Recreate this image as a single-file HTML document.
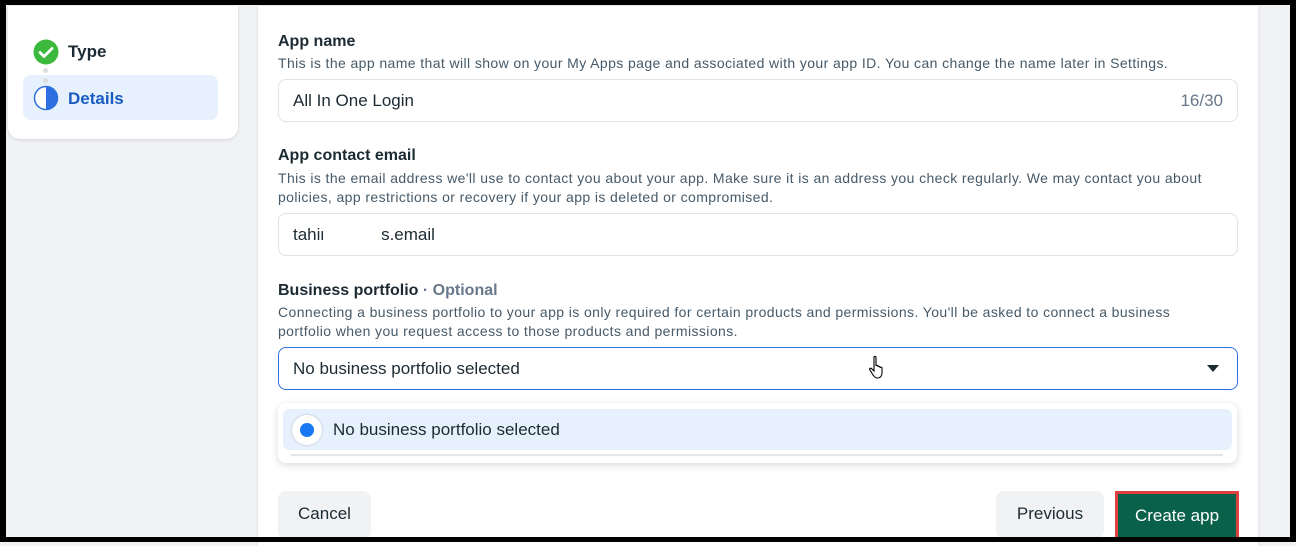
<!DOCTYPE html>
<html><head><meta charset="utf-8"><style>
*{box-sizing:border-box;margin:0;padding:0}
body{width:1296px;height:542px;overflow:hidden;background:#f0f2f5;font-family:"Liberation Sans",Arial,sans-serif;color:#1c2b33;position:relative}
.frame{position:absolute;inset:0;border:solid #000;border-width:5px 6px 5px 6px;z-index:10;pointer-events:none}
.side{position:absolute;left:8px;top:6px;width:230px;height:133px;background:#fff;border-radius:0 0 12px 12px;box-shadow:0 1px 3px rgba(0,0,0,.12)}
.main{position:absolute;left:258px;top:6px;width:1000px;height:540px;background:#fff;box-shadow:0 0 3px rgba(0,0,0,.1)}
.abs{position:absolute}
.lbl{font-size:16px;font-weight:bold;color:#1c2b33}
.desc{font-size:14px;color:#465a69;line-height:19px;letter-spacing:.4px}
.inp{position:absolute;left:278px;width:960px;height:43px;border:1px solid #dee3e9;border-radius:8px;background:#fff;font-size:17px;padding:0 14px;line-height:42px;color:#1c2b33}
.btn{position:absolute;border-radius:8px;background:#f1f2f3;font-size:17px;color:#1c2b33;text-align:center;line-height:46px}
</style></head><body>
<div class="side">
  <svg class="abs" style="left:25px;top:33px" width="26" height="26" viewBox="0 0 26 26"><circle cx="13" cy="13" r="12.5" fill="#3cb93c"/><path d="M7 13.5l4 4 8-8" stroke="#fff" stroke-width="2.8" fill="none" stroke-linecap="round" stroke-linejoin="round"/></svg>
  <div class="abs" style="left:60px;top:36px;font-size:17px;font-weight:bold">Type</div>
  <div class="abs" style="left:35px;top:62px;width:5px;height:5px;border-radius:50%;background:#ddd"></div>
  <div class="abs" style="left:15px;top:69px;width:195px;height:45px;background:#e7f1fd;border-radius:8px"></div>
  <div class="abs" style="left:35px;top:72px;width:5px;height:5px;border-radius:50%;background:#ddd"></div>
  <svg class="abs" style="left:25px;top:79px" width="26" height="26" viewBox="0 0 26 26"><circle cx="13" cy="13" r="11.5" fill="#fff" stroke="#2d6fe0" stroke-width="1.5"/><path d="M13 1.5a11.5 11.5 0 0 1 0 23z" fill="#2d6fe0"/></svg>
  <div class="abs" style="left:60px;top:83px;font-size:17px;font-weight:bold;color:#1b5cc2">Details</div>
</div>
<div class="main"></div>
<div class="abs lbl" style="left:278px;top:33px">App name</div>
<div class="abs desc" style="left:278px;top:54px;white-space:nowrap">This is the app name that will show on your My Apps page and associated with your app ID. You can change the name later in Settings.</div>
<div class="inp" style="top:79px">All In One Login<span style="position:absolute;right:14px;color:#67788a">16/30</span></div>
<div class="abs lbl" style="left:278px;top:147px">App contact email</div>
<div class="abs desc" style="left:278px;top:169px;width:940px">This is the email address we'll use to contact you about your app. Make sure it is an address you check regularly. We may contact you about policies, app restrictions or recovery if your app is deleted or compromised.</div>
<div class="inp" style="top:213px">tahir<span style="display:inline-block;width:58px;margin-left:-3px;height:20px;background:#fff;vertical-align:middle"></span>s.email</div>
<div class="abs lbl" style="left:278px;top:282px">Business portfolio <span style="color:#67788a">· Optional</span></div>
<div class="abs desc" style="left:278px;top:303px;width:920px">Connecting a business portfolio to your app is only required for certain products and permissions. You'll be asked to connect a business portfolio when you request access to those products and permissions.</div>
<div class="inp" style="top:347px;border-color:#2d6fe0">No business portfolio selected
  <svg style="position:absolute;right:17px;top:16px" width="14" height="9" viewBox="0 0 14 9"><path d="M1 1h12L7 8z" fill="#1c2b33"/></svg></div>
<svg class="abs" style="left:868px;top:355px" width="20" height="26" viewBox="0 0 20 26"><path d="M6 2.5c0-1.4 2-1.4 2 0V11c0-1 2-1 2 0v1c0-1 2-1 2 0v1c0-1 2-1 2 0v5c0 3-2 5-4 5H9c-2 0-3-2-4-3L2 15c-1-1 0-2.5 1.5-1.5L6 16z" fill="#fff" stroke="#000" stroke-width="1.1"/></svg>
<div class="abs" style="left:278px;top:403px;width:959px;height:60px;background:#fff;border-radius:8px;box-shadow:0 2px 8px rgba(0,0,0,.15)">
  <div class="abs" style="left:5px;top:6px;width:949px;height:41px;background:#e7f1fd;border-radius:6px"></div>
  <div class="abs" style="left:14px;top:12px;width:30px;height:30px;border-radius:50%;background:#fff;box-shadow:0 0 2px rgba(0,0,0,.25)"></div>
  <div class="abs" style="left:22px;top:20px;width:14px;height:14px;border-radius:50%;background:#1877f2"></div>
  <div class="abs" style="left:55px;top:17px;font-size:17px">No business portfolio selected</div>
  <div class="abs" style="left:13px;top:51px;width:932px;height:2px;background:#e4e6ea"></div>
</div>
<div class="btn" style="left:278px;top:491px;width:93px;height:48px">Cancel</div>
<div class="btn" style="left:996px;top:491px;width:108px;height:48px">Previous</div>
<div class="abs" style="left:1115px;top:491px;width:124px;height:51px;border:3px solid #e0403f;background:#0a6149;color:#fff;font-size:17px;text-align:center;line-height:43px">Create app</div>
<div class="frame"></div>
</body></html>
